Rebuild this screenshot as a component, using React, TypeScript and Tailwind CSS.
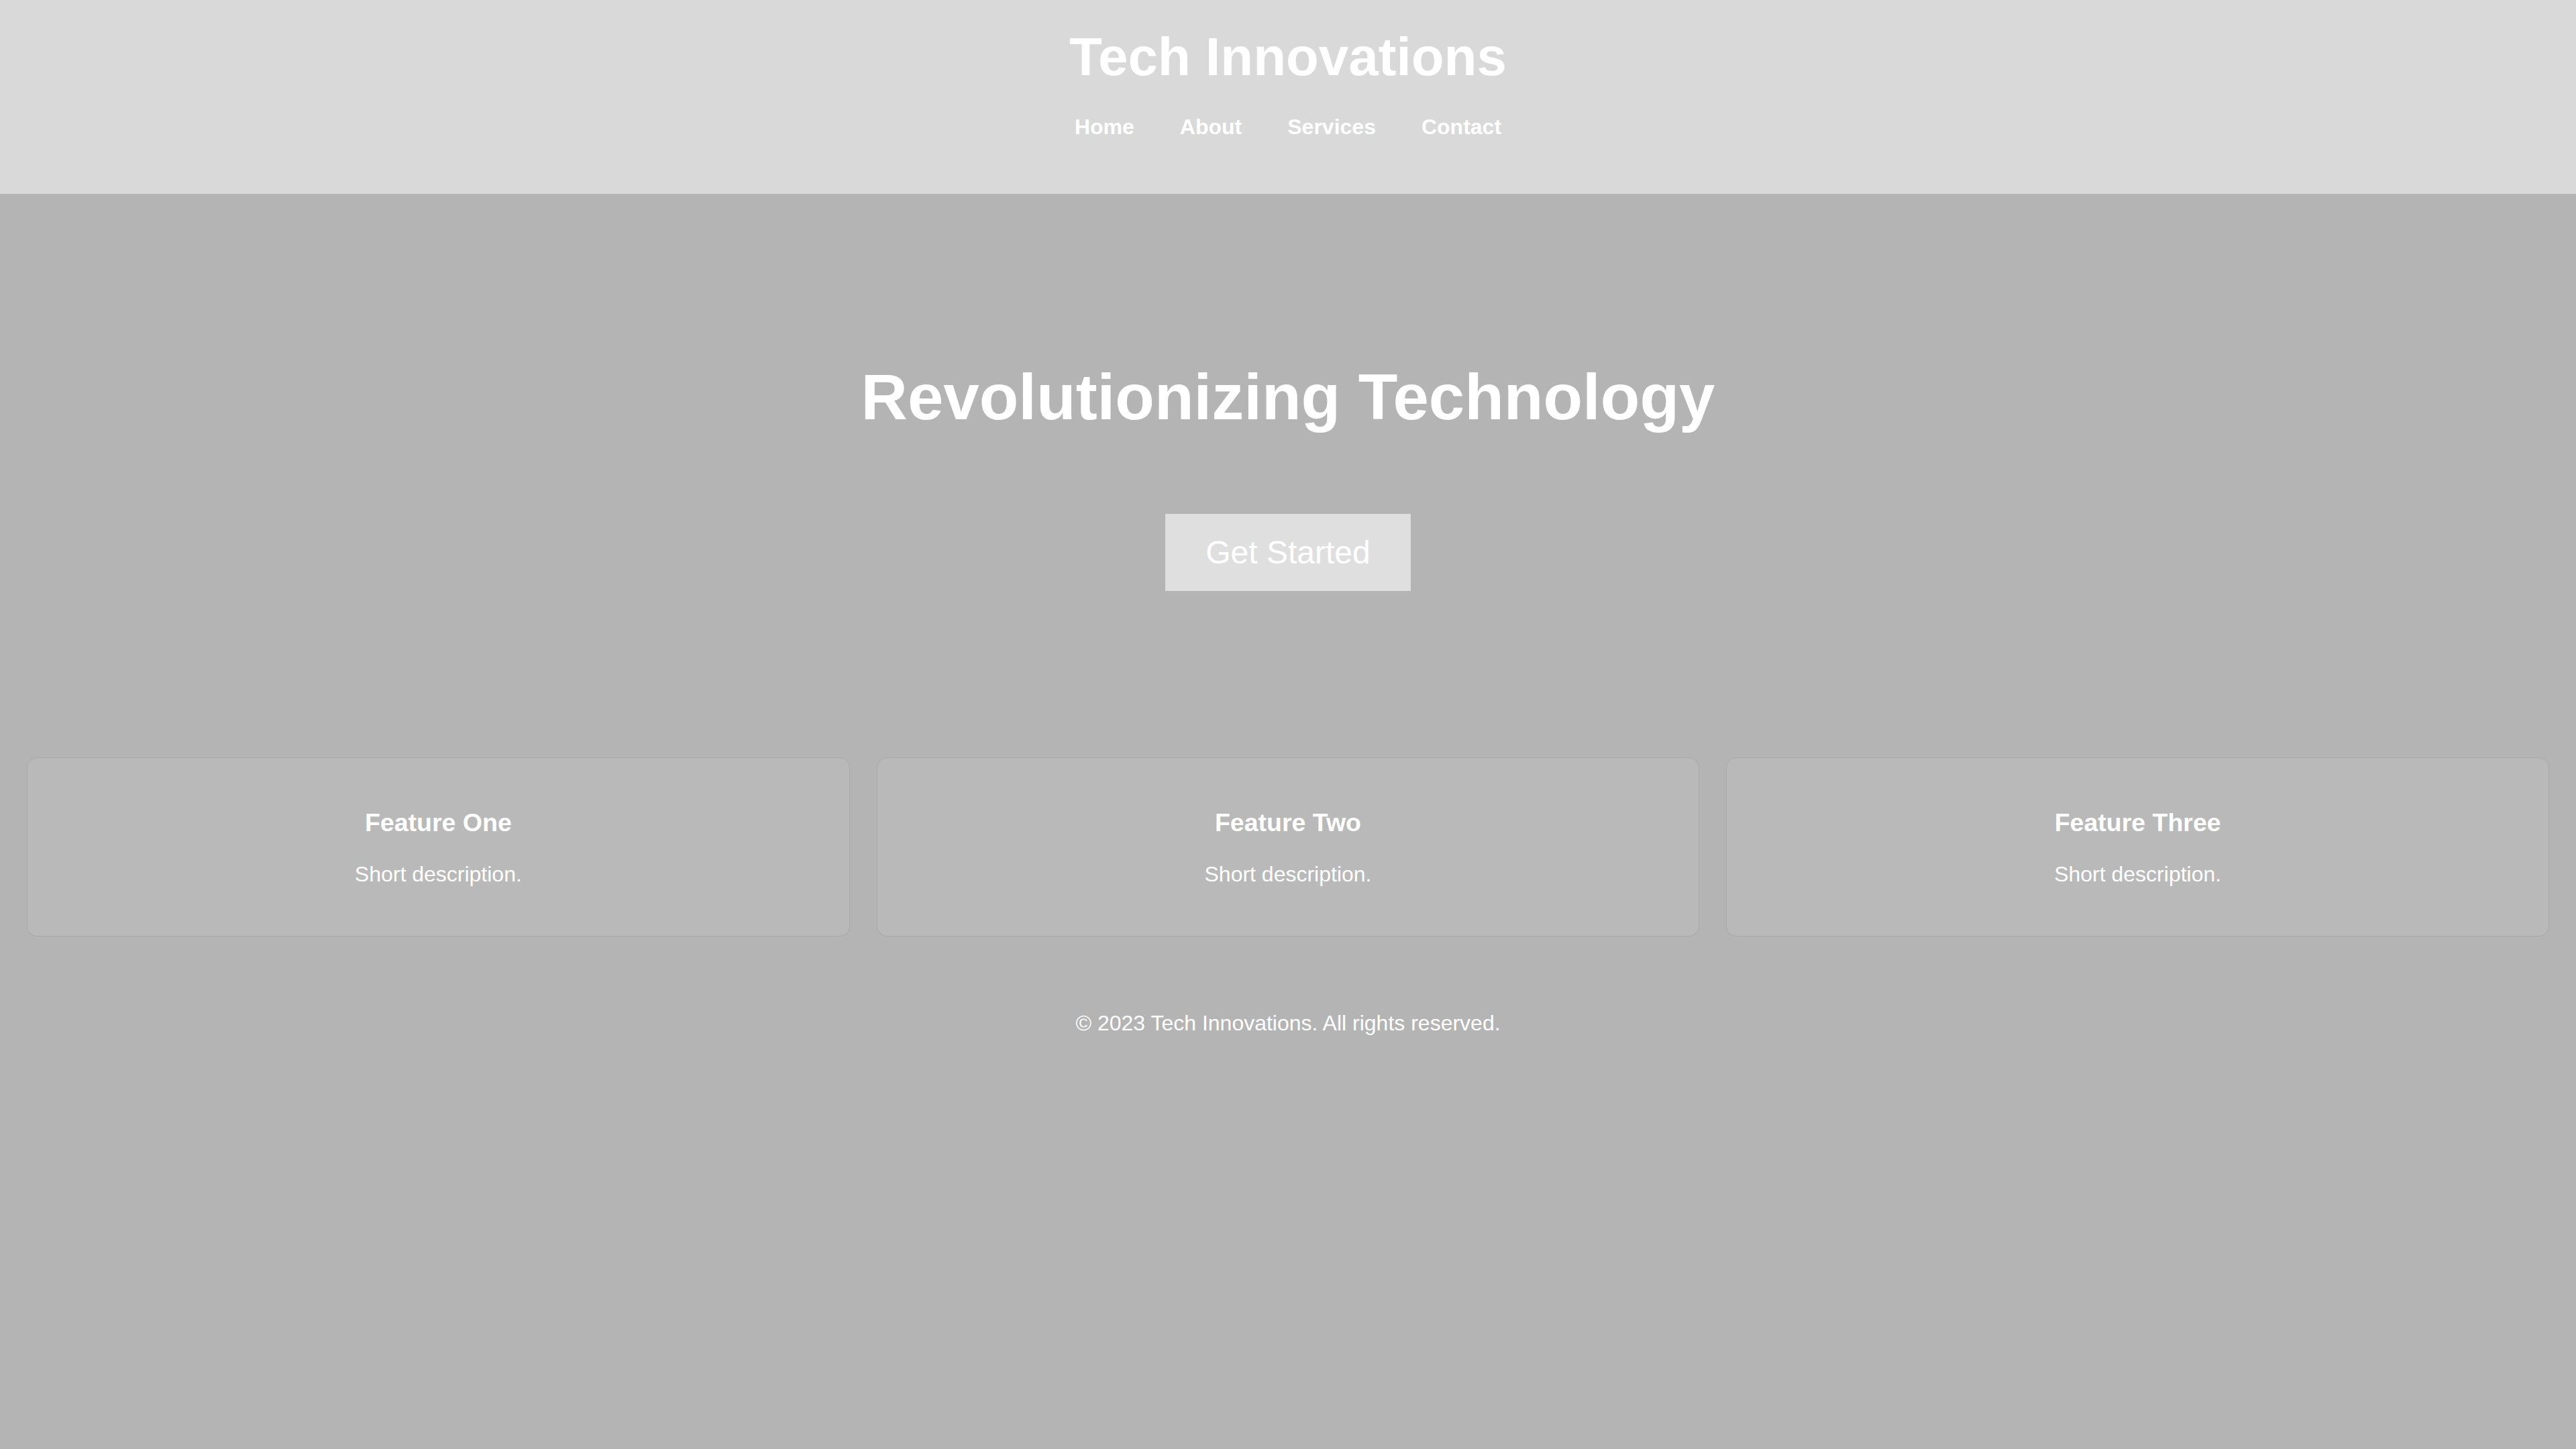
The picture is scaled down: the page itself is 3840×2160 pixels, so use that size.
import React from 'react'

const links = ['Home', 'About', 'Services', 'Contact']

const features = [
  { title: 'Feature One', text: 'Short description.' },
  { title: 'Feature Two', text: 'Short description.' },
  { title: 'Feature Three', text: 'Short description.' },
]

const App: React.FC = () => {
  return (
    <div className="min-h-screen bg-[#b4b4b4] font-['Liberation_Sans',Arial,sans-serif] text-white">
      <header className="h-[289px] bg-[#d9d9d9] pt-[39px] flex flex-col items-center">
        <h1 className="text-[80px] leading-[92px] font-bold">Tech Innovations</h1>
        <nav className="mt-[40px] flex gap-[68px] text-[32px] leading-[37px] font-bold">
          {links.map((link) => (
            <a key={link} href="#">
              {link}
            </a>
          ))}
        </nav>
      </header>

      <section className="pt-[248px] flex flex-col items-center">
        <h2 className="text-[96px] leading-[110px] font-bold">Revolutionizing Technology</h2>
        <button className="mt-[119px] bg-[#dfdfdf] px-[60px] py-[30px] text-[48px] leading-[55px] text-white">
          Get Started
        </button>
      </section>

      <section className="mt-[248px] px-[40px] grid grid-cols-3 gap-[40px]">
        {features.map((f) => (
          <div
            key={f.title}
            className="rounded-[15px] bg-[#b9b9b9] border border-[#a8a8a8] text-center pt-[75px] pb-[73px]"
          >
            <h3 className="text-[37.5px] leading-[43px] font-bold">{f.title}</h3>
            <p className="mt-[37px] text-[32px] leading-[37px]">{f.text}</p>
          </div>
        ))}
      </section>

      <footer className="mt-[111px] text-center text-[32px] leading-[37px]">
        © 2023 Tech Innovations. All rights reserved.
      </footer>
    </div>
  )
}

export default App
